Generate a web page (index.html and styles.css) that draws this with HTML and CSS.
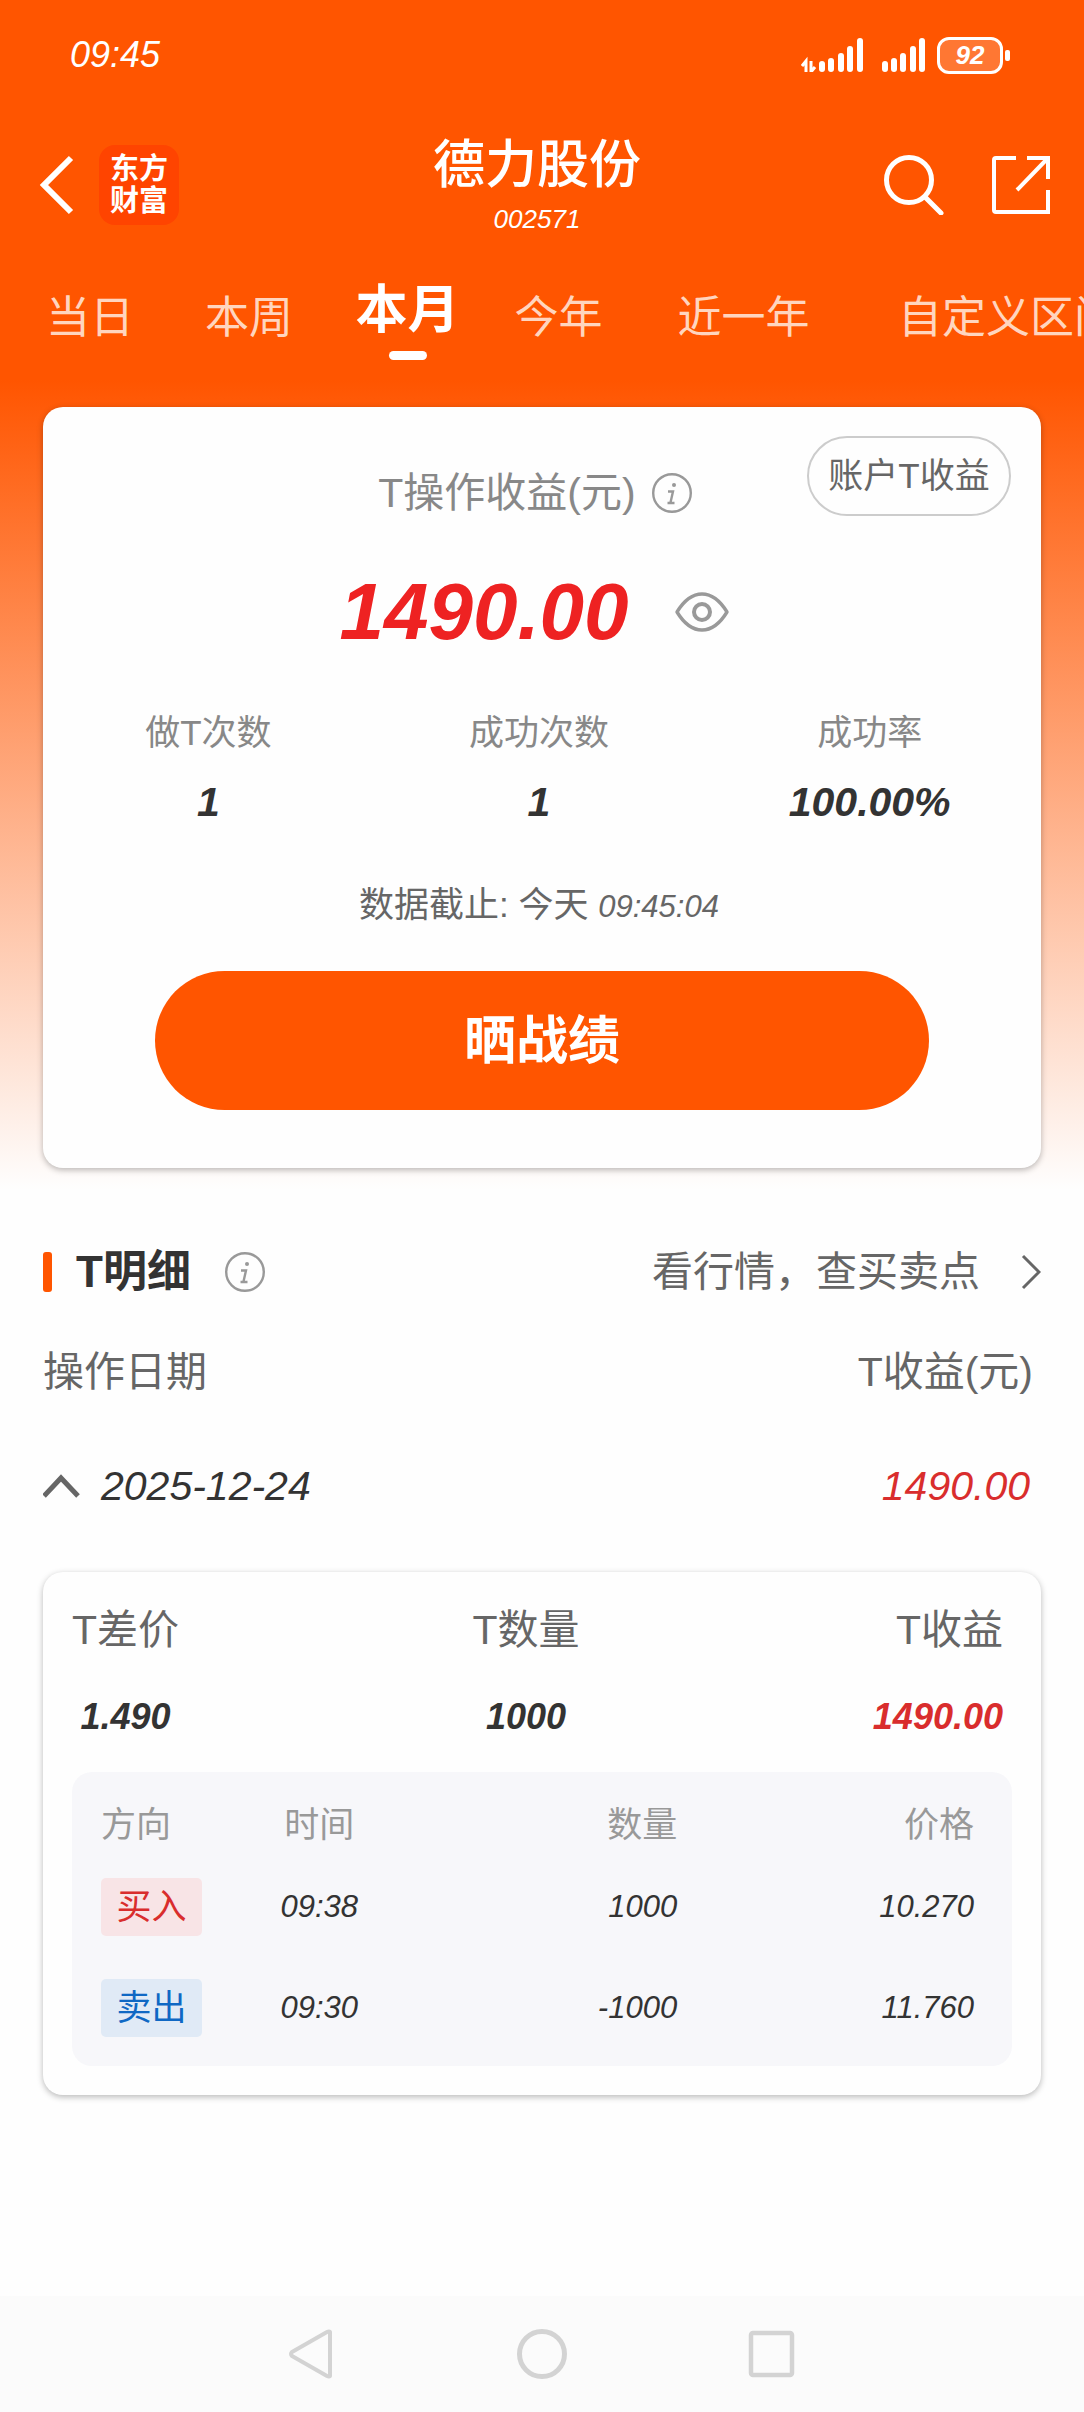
FILE: index.html
```html
<!DOCTYPE html>
<html lang="zh-CN">
<head>
<meta charset="utf-8">
<meta name="viewport" content="width=device-width, initial-scale=1">
<title>德力股份 002571</title>
<link rel="stylesheet" href="styles.css">
</head>
<body>
<div class="page">
  <div class="status">
    <span class="status-time num">09:45</span>
    <div class="status-icons">
      <svg class="signal-data" viewBox="0 0 62 34" aria-hidden="true">
        <path d="M5 34V23l-4 5M10 23v11l4-5" stroke="#fff" stroke-width="3" fill="none"/>
        <g fill="#fff"><rect x="18" y="23" width="6" height="11" rx="3"/><rect x="27" y="20" width="6" height="14" rx="3"/><rect x="37" y="15" width="6" height="19" rx="3"/><rect x="46" y="8" width="6" height="26" rx="3"/><rect x="56" y="0" width="6" height="34" rx="3"/></g>
      </svg>
      <svg class="signal" viewBox="0 0 43 34" aria-hidden="true">
        <g fill="#fff"><rect x="0" y="23" width="6" height="11" rx="3"/><rect x="9" y="20" width="6" height="14" rx="3"/><rect x="18" y="15" width="6" height="19" rx="3"/><rect x="28" y="8" width="6" height="26" rx="3"/><rect x="37" y="0" width="6" height="34" rx="3"/></g>
      </svg>
      <div class="battery"><span class="battery-body num">92</span><span class="battery-tip"></span></div>
    </div>
  </div>

  <header class="appbar">
    <div class="appbar-left">
      <button class="icon-btn" type="button" aria-label="返回">
        <svg width="50" height="60" viewBox="0 0 50 60"><path d="M47 3L20 30l27 27" fill="none" stroke="#fff" stroke-width="6"/></svg>
      </button>
      <a class="logo" href="#">东方<br>财富</a>
    </div>
    <div class="appbar-title">
      <h1 class="stock-name">德力股份</h1>
      <p class="stock-code num">002571</p>
    </div>
    <div class="appbar-right">
      <button class="icon-btn" type="button" aria-label="搜索">
        <svg width="60" height="60" viewBox="0 0 60 60"><circle cx="25" cy="25" r="22.5" fill="none" stroke="#fff" stroke-width="5"/><path d="M41 42l16 16" stroke="#fff" stroke-width="5" stroke-linecap="round"/></svg>
      </button>
      <button class="icon-btn" type="button" aria-label="分享">
        <svg width="58" height="58" viewBox="0 0 58 58"><path d="M24 2H4q-2 0-2 2v50q0 2 2 2h52V34M35 2h21v21M56 2L25 34" fill="none" stroke="#fff" stroke-width="4"/></svg>
      </button>
    </div>
  </header>

  <nav class="tabs">
    <a class="tab" href="#">当日</a>
    <a class="tab" href="#">本周</a>
    <a class="tab tab-active" href="#" aria-current="page">本月</a>
    <a class="tab" href="#">今年</a>
    <a class="tab" href="#">近一年</a>
    <a class="tab" href="#">自定义区间</a>
  </nav>

  <main class="content">
    <section class="card summary">
      <div class="summary-top">
        <h2 class="summary-label">T操作收益(元)
          <svg class="info" viewBox="0 0 40 40" aria-hidden="true"><circle cx="20" cy="20" r="18.8" fill="none" stroke="#999" stroke-width="2.4"/><circle cx="22" cy="12" r="2" fill="#999"/><path d="M16 18.500h5l-2.500 11M15.500 30h7" fill="none" stroke="#999" stroke-width="2.400"/></svg>
        </h2>
        <button class="pill" type="button">账户T收益</button>
      </div>
      <div class="total">
        <strong class="total-value num">1490.00</strong>
        <button class="icon-btn" type="button" aria-label="隐藏金额">
          <svg width="54" height="40" viewBox="0 0 54 40"><path d="M2 20Q13 2 27 2t25 18Q41 38 27 38T2 20z" fill="none" stroke="#999" stroke-width="3.400" stroke-linejoin="round"/><circle cx="27" cy="20" r="8" fill="none" stroke="#999" stroke-width="4"/></svg>
        </button>
      </div>
      <dl class="stats">
        <div><dt>做T次数</dt><dd class="num">1</dd></div>
        <div><dt>成功次数</dt><dd class="num">1</dd></div>
        <div><dt>成功率</dt><dd class="num">100.00%</dd></div>
      </dl>
      <p class="cutoff">数据截止: 今天 <time class="cutoff-time num">09:45:04</time></p>
      <button class="share" type="button">晒战绩</button>
    </section>

    <section class="details">
      <div class="details-head">
        <h2 class="details-title">T明细</h2>
        <svg class="info" viewBox="0 0 40 40" aria-hidden="true"><circle cx="20" cy="20" r="18.8" fill="none" stroke="#999" stroke-width="2.4"/><circle cx="22" cy="12" r="2" fill="#999"/><path d="M16 18.500h5l-2.500 11M15.500 30h7" fill="none" stroke="#999" stroke-width="2.400"/></svg>
        <a class="quote-link" href="#">看行情，查买卖点
          <svg width="20" height="36" viewBox="0 0 20 36" aria-hidden="true"><path d="M2 2l16 16L2 34" fill="none" stroke="#666" stroke-width="3"/></svg>
        </a>
      </div>
      <div class="list-head"><span>操作日期</span><span>T收益(元)</span></div>
      <button class="day" type="button" aria-expanded="true">
        <svg width="38" height="24" viewBox="0 0 38 24" aria-hidden="true"><path d="M1 22L18 4l17 18" fill="none" stroke="#666" stroke-width="5"/></svg>
        <span class="num">2025-12-24</span>
        <span class="day-profit num">1490.00</span>
      </button>

      <div class="card trade">
        <dl class="trade-summary">
          <div><dt>T差价</dt><dd class="num">1.490</dd></div>
          <div><dt>T数量</dt><dd class="num">1000</dd></div>
          <div><dt>T收益</dt><dd class="num gain">1490.00</dd></div>
        </dl>
        <div class="orders-panel">
          <table class="orders">
            <thead>
              <tr><th class="col-side">方向</th><th class="col-time">时间</th><th class="col-qty">数量</th><th class="col-price">价格</th></tr>
            </thead>
            <tbody>
              <tr><td class="col-side"><span class="tag tag-buy">买入</span></td><td class="col-time num">09:38</td><td class="col-qty num">1000</td><td class="col-price num">10.270</td></tr>
              <tr><td class="col-side"><span class="tag tag-sell">卖出</span></td><td class="col-time num">09:30</td><td class="col-qty num">-1000</td><td class="col-price num">11.760</td></tr>
            </tbody>
          </table>
        </div>
      </div>
    </section>
  </main>

  <footer class="sysnav">
    <button class="icon-btn" type="button" aria-label="后退"><svg width="50" height="50" viewBox="0 0 50 50"><path d="M44 3v44q-1 1-3 0L6 27q-2-2 0-4L41 3q2-1 3 0z" fill="none" stroke="#d3d3d3" stroke-width="4" stroke-linejoin="round"/></svg></button>
    <button class="icon-btn" type="button" aria-label="主屏幕"><svg width="50" height="50" viewBox="0 0 50 50"><circle cx="25" cy="25" r="22.500" fill="none" stroke="#d3d3d3" stroke-width="5"/></svg></button>
    <button class="icon-btn" type="button" aria-label="最近任务"><svg width="50" height="50" viewBox="0 0 50 50"><rect x="3" y="4" width="41" height="42" rx="2" fill="none" stroke="#d3d3d3" stroke-width="4.500"/></svg></button>
  </footer>
</div>
</body>
</html>
```

FILE: styles.css
```css
:root {
  --brand: #ff5500;
  --text: #333;
  --muted: #666;
  --soft: #888;
  --gain: #d92d2d;
  --gutter: 43px;
}

* { box-sizing: border-box; }

body {
  margin: 0;
  background: #fefefe;
  color: var(--text);
  font-family: "Liberation Sans", "Noto Sans CJK SC", sans-serif;
  font-size: 41px;
  line-height: 60px;
}

h1, h2, p, dl, dd { margin: 0; }

button {
  margin: 0;
  padding: 0;
  border: 0;
  background: none;
  color: inherit;
  font: inherit;
}

a { color: inherit; text-decoration: none; }

svg { display: block; flex: none; }

.num { font-style: italic; }

.icon-btn { display: flex; }

.page {
  display: flex;
  flex-direction: column;
  min-height: 100vh;
  background: linear-gradient(var(--brand) 380px, #fefefe 1190px);
}

/* status bar */
.status {
  display: flex;
  justify-content: space-between;
  align-items: center;
  height: 110px;
  padding: 0 74px 0 70px;
  color: #fff;
}

.status-time { font-size: 36px; }

.status-icons { display: flex; align-items: center; }

.signal-data { width: 62px; height: 34px; margin-right: 19px; }

.signal { width: 43px; height: 34px; margin-right: 12px; }

.battery { display: flex; align-items: center; gap: 2px; }

.battery-body {
  width: 66px;
  height: 37px;
  border: 3px solid #fff;
  border-radius: 12px;
  background: #ff7733;
  font-size: 26px;
  font-weight: bold;
  line-height: 31px;
  text-align: center;
}

.battery-tip {
  width: 5px;
  height: 11px;
  border-radius: 2px;
  background: #fff;
}

/* title bar */
.appbar {
  display: grid;
  grid-template-columns: 1fr auto 1fr;
  align-items: center;
  height: 150px;
  padding: 0 34px 0 24px;
  color: #fff;
}

.appbar-left { display: flex; align-items: center; gap: 25px; }

.appbar-right {
  display: flex;
  justify-content: flex-end;
  align-items: center;
  gap: 48px;
}

.logo {
  width: 80px;
  height: 80px;
  padding: 8px 0;
  border-radius: 16px;
  background: #ff4400;
  font-size: 29px;
  font-weight: bold;
  line-height: 32px;
  text-align: center;
}

.appbar-title { text-align: center; }

.stock-name { font-size: 52px; font-weight: 500; line-height: 64px; }

.stock-code { margin-top: 4px; font-size: 26px; line-height: 36px; }

/* period tabs */
.tabs {
  display: grid;
  grid-template-columns: 160px 158px 159px 143px 227px 302px;
  align-items: end;
  height: 100px;
  padding-left: 10px;
  overflow: hidden;
  color: #ffd5bf;
  font-size: 44px;
  line-height: 48px;
  text-align: center;
  white-space: nowrap;
}

.tab { padding-bottom: 18px; }

.tab-active {
  padding-bottom: 0;
  color: #fff;
  font-size: 52px;
  font-weight: bold;
  line-height: 60px;
}

.tab-active::after {
  content: "";
  display: block;
  width: 38px;
  height: 9px;
  margin: 11px auto 0;
  border-radius: 5px;
  background: #fff;
}

.content { padding: 47px var(--gutter) 60px; }

.card {
  border-radius: 20px;
  background: #fefefe;
  box-shadow: 0 2px 6px rgba(0, 0, 0, 0.28);
}

/* profit summary */
.summary { padding: 29px 0 58px; }

.summary-top {
  display: grid;
  grid-template-columns: 1fr auto 1fr;
  align-items: start;
  padding: 0 30px 0 16px;
}

.summary-label {
  display: flex;
  grid-column: 2;
  align-items: center;
  gap: 16px;
  padding-top: 27px;
  color: var(--soft);
  font-size: 41px;
  font-weight: normal;
}

.info { width: 40px; height: 40px; }

.pill {
  justify-self: end;
  width: 204px;
  height: 80px;
  border: 2px solid #ccc;
  border-radius: 40px;
  color: var(--muted);
  font-size: 35px;
}

.total {
  display: flex;
  justify-content: center;
  align-items: center;
  gap: 46px;
  margin-top: 39px;
  padding-right: 16px;
}

.total-value { color: #ee2222; font-size: 80px; line-height: 100px; }

.stats {
  display: grid;
  grid-template-columns: repeat(3, 1fr);
  margin-top: 49px;
  padding-right: 6px;
  text-align: center;
}

.stats dt { color: var(--soft); font-size: 35px; line-height: 44px; }

.stats dd {
  margin-top: 22px;
  font-size: 41px;
  font-weight: bold;
  line-height: 50px;
}

.cutoff {
  margin-top: 56px;
  padding-right: 6px;
  color: var(--muted);
  font-size: 35px;
  line-height: 44px;
  text-align: center;
}

.cutoff-time { font-size: 31px; line-height: 31px; }

.share {
  display: block;
  width: calc(100% - 224px);
  height: 139px;
  margin: 44px auto 0;
  border-radius: 70px;
  background: var(--brand);
  color: #fff;
  font-size: 52px;
  font-weight: bold;
}

/* trade details */
.details { margin-top: 74px; }

.details-head { display: flex; align-items: center; }

.details-title {
  display: flex;
  align-items: center;
  gap: 24px;
  margin-right: 34px;
  font-size: 44px;
}

.details-title::before {
  content: "";
  width: 9px;
  height: 40px;
  border-radius: 3px;
  background: var(--brand);
}

.quote-link {
  display: flex;
  align-items: center;
  gap: 41px;
  margin-left: auto;
  color: var(--muted);
}

.list-head {
  display: flex;
  justify-content: space-between;
  margin-top: 40px;
  padding-right: 8px;
  color: var(--muted);
}

.day {
  display: flex;
  align-items: center;
  gap: 20px;
  width: 100%;
  margin-top: 54px;
  padding-right: 11px;
}

.day-profit { margin-left: auto; color: var(--gain); }

.trade { margin-top: 56px; padding: 30px 29px 29px; }

.trade-summary {
  display: flex;
  justify-content: space-between;
  padding-right: 9px;
  text-align: center;
}

.trade-summary dt { color: var(--muted); line-height: 56px; }

.trade-summary div:last-child { text-align: right; }

.trade-summary dd {
  margin-top: 35px;
  font-size: 36px;
  font-weight: bold;
  line-height: 48px;
}

.trade-summary .gain { color: var(--gain); }

.orders-panel {
  margin-top: 31px;
  padding: 22px 38px 8px 29px;
  border-radius: 20px;
  background: #f7f7fa;
}

.orders {
  width: 100%;
  border-collapse: collapse;
  table-layout: fixed;
  font-size: 31px;
}

.orders th {
  height: 62px;
  padding: 0;
  color: #999;
  font-size: 35px;
  font-weight: normal;
}

.orders td { height: 101px; padding: 0; }

.orders .col-side { width: 12%; text-align: left; }
.orders .col-time { width: 26%; text-align: center; }
.orders .col-qty { width: 28%; text-align: right; }
.orders .col-price { width: 34%; text-align: right; }

.tag {
  display: block;
  width: 101px;
  border-radius: 5px;
  font-size: 35px;
  line-height: 58px;
  text-align: center;
}

.tag-buy { background: #f8e4e6; color: var(--gain); }
.tag-sell { background: #e0eaf6; color: #0f68c4; }

/* system navigation */
.sysnav {
  display: flex;
  justify-content: center;
  align-items: center;
  gap: 181px;
  height: 116px;
  margin-top: auto;
  background: #fbfbfb;
}
```
